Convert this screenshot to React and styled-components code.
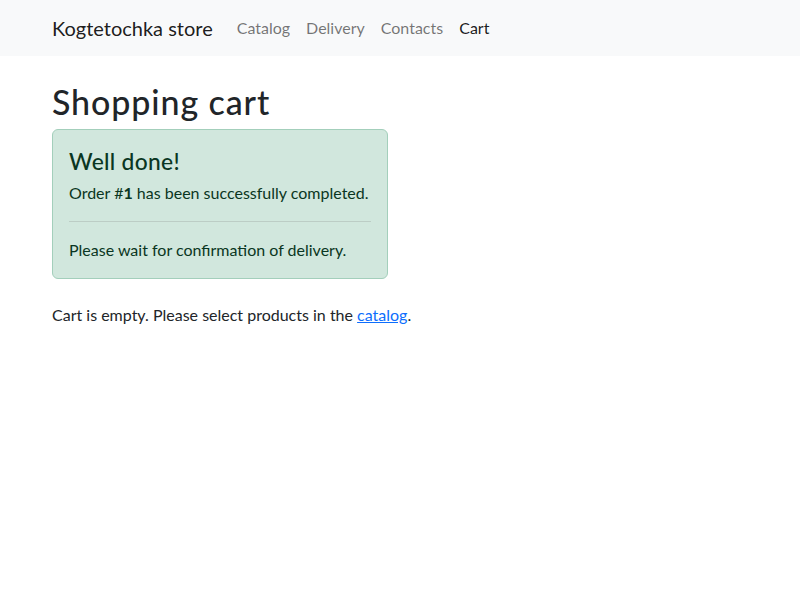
import React from "react";
import styled, { createGlobalStyle } from "styled-components";

const Global = createGlobalStyle`
  *, *::before, *::after { box-sizing: border-box; }
  body {
    margin: 0;
    font-family: "Segoe UI", Lato, "Noto Sans", sans-serif;
    font-size: 16px;
    line-height: 1.5;
    color: #212529;
    background: #fff;
  }
`;

const Navbar = styled.nav`
  background: #f8f9fa;
  padding: 8px 0;
`;

const Container = styled.div`
  width: 720px;
  margin: 0 auto;
  padding: 0 12px;
  display: flex;
  align-items: center;
`;

const Brand = styled.a`
  font-size: 20px;
  line-height: 30px;
  padding: 5px 0;
  margin-right: 16px;
  color: rgba(0, 0, 0, 0.9);
  text-decoration: none;
`;

const NavList = styled.ul`
  display: flex;
  list-style: none;
  margin: 0;
  padding: 0;
`;

const NavLink = styled.a`
  display: block;
  padding: 8px;
  color: ${(p) => (p.$active ? "rgba(0,0,0,0.9)" : "rgba(0,0,0,0.55)")};
  text-decoration: none;
`;

const Main = styled.main`
  width: 720px;
  margin: 24px auto 0;
  padding: 0 12px;
`;

const Title = styled.h1`
  font-size: 34px;
  font-weight: 500;
  line-height: 1.2;
  letter-spacing: 0.9px;
  padding-top: 2px;
  margin: 0 0 6px;
`;

const Alert = styled.div`
  width: 336px;
  padding: 16px;
  margin-bottom: 24px;
  border: 1px solid #a3cfbb;
  border-radius: 6px;
  background: #d1e7dd;
  color: #0a3622;
`;

const AlertHeading = styled.h4`
  font-size: 22.8px;
  font-weight: 500;
  line-height: 1.2;
  letter-spacing: 0.3px;
  padding-top: 2px;
  margin: 0 0 6px;
`;

const Para = styled.p`
  margin: 0 0 ${(p) => (p.$mb ? p.$mb : 0)}px;
`;

const Rule = styled.hr`
  margin: 16px 0;
  border: 0;
  border-top: 1px solid currentColor;
  opacity: 0.25;
`;

const Link = styled.a`
  color: #0d6efd;
  text-decoration: underline;
`;

export default function App() {
  return (
    <>
      <Global />
      <Navbar>
        <Container>
          <Brand href="#">Kogtetochka store</Brand>
          <NavList>
            <li><NavLink href="#">Catalog</NavLink></li>
            <li><NavLink href="#">Delivery</NavLink></li>
            <li><NavLink href="#">Contacts</NavLink></li>
            <li><NavLink href="#" $active>Cart</NavLink></li>
          </NavList>
        </Container>
      </Navbar>
      <Main>
        <Title>Shopping cart</Title>
        <Alert>
          <AlertHeading>Well done!</AlertHeading>
          <Para $mb={16}>
            Order #<strong>1</strong> has been successfully completed.
          </Para>
          <Rule />
          <Para>Please wait for confirmation of delivery.</Para>
        </Alert>
        <Para>
          Cart is empty. Please select products in the <Link href="#">catalog</Link>.
        </Para>
      </Main>
    </>
  );
}
